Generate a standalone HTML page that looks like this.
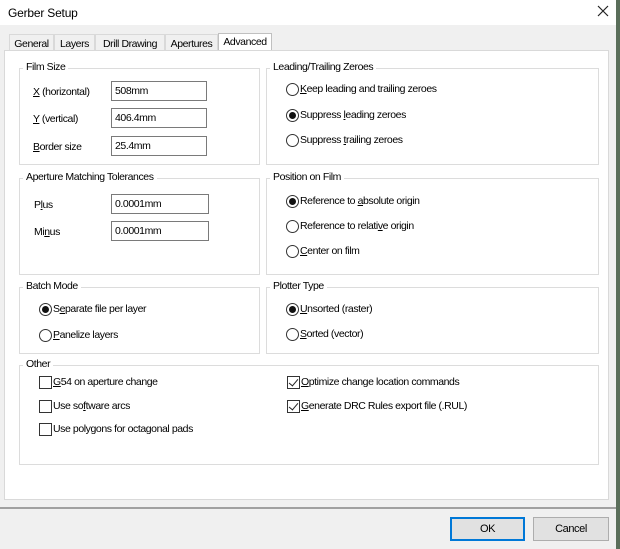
<!DOCTYPE html>
<html><head><style>
*{box-sizing:border-box;margin:0;padding:0}
body{width:620px;height:549px;background:#f0f0f0;font-family:"Liberation Sans",sans-serif;font-size:10.5px;letter-spacing:-0.42px;color:#000;position:relative;overflow:hidden}
.a{position:absolute;white-space:nowrap}
.title{left:0;top:0;width:616px;height:25px;background:#fff}
.tab{position:absolute;top:34px;height:17px;border:1px solid #d9d9d9;border-bottom:none;background:#f0f0f0;padding:3px 0 0 0;text-align:center}
.page{left:4px;top:50px;width:605px;height:450px;background:#fff;border:1px solid #d9d9d9}
.grp{position:absolute;border:1px solid #dcdcdc}
.gt{position:absolute;background:#fff;padding:0 3px;top:-8px;left:3px}
.inp{position:absolute;height:20px;border:1px solid #7a7a7a;background:#fff;padding:3px 0 0 3px}
.rad{position:absolute;width:13px;height:13px;border:1px solid #333;border-radius:50%;background:#fff}
.rad.on::after{content:"";position:absolute;left:2px;top:2px;width:7px;height:7px;border-radius:50%;background:#111}
.chk{position:absolute;width:13px;height:13px;border:1px solid #333;background:#fff}
.chk.on::after{content:"";position:absolute;left:3px;top:0px;width:4px;height:8px;border:solid #222;border-width:0 1.2px 1.2px 0;transform:rotate(40deg)}
u{text-decoration:underline}
.btn{position:absolute;top:517px;height:24px;background:#e1e1e1;border:1px solid #adadad;text-align:center;padding-top:5px;font-size:11px}
</style></head><body>
<div class="a title"></div>
<div class="a" style="left:8px;top:6px;font-size:12px;letter-spacing:-0.2px">Gerber Setup</div>
<svg class="a" style="left:597px;top:5px" width="12" height="12"><path d="M1 1L11 11M11 1L1 11" stroke="#222" stroke-width="1.2"/></svg>
<div class="a" style="left:616px;top:0;width:4px;height:549px;background:#5a6e5a"></div>

<div class="tab" style="left:9px;width:45px">General</div>
<div class="tab" style="left:54px;width:41px">Layers</div>
<div class="tab" style="left:95px;width:70px">Drill Drawing</div>
<div class="tab" style="left:165px;width:53px">Apertures</div>
<div class="a page"></div>
<div class="tab" style="left:218px;top:33px;width:54px;height:17px;background:#fff;border-color:#c0c0c0;border-bottom:none;z-index:2;padding-top:2px">Advanced</div>

<div class="grp" style="left:19px;top:68px;width:241px;height:97px"><div class="gt">Film Size</div></div>
<div class="a" style="left:33px;top:86px"><u>X</u> (horizontal)</div>
<div class="a" style="left:33px;top:113px"><u>Y</u> (vertical)</div>
<div class="a" style="left:33px;top:141px"><u>B</u>order size</div>
<div class="inp" style="left:111px;top:81px;width:96px">508mm</div>
<div class="inp" style="left:111px;top:108px;width:96px">406.4mm</div>
<div class="inp" style="left:111px;top:136px;width:96px">25.4mm</div>

<div class="grp" style="left:266px;top:68px;width:333px;height:97px"><div class="gt">Leading/Trailing Zeroes</div></div>
<div class="rad" style="left:286px;top:83px"></div><div class="a" style="left:300px;top:83px"><u>K</u>eep leading and trailing zeroes</div>
<div class="rad on" style="left:286px;top:109px"></div><div class="a" style="left:300px;top:109px">Suppress <u>l</u>eading zeroes</div>
<div class="rad" style="left:286px;top:134px"></div><div class="a" style="left:300px;top:134px">Suppress <u>t</u>railing zeroes</div>

<div class="grp" style="left:19px;top:178px;width:241px;height:97px"><div class="gt">Aperture Matching Tolerances</div></div>
<div class="a" style="left:34px;top:199px">P<u>l</u>us</div>
<div class="a" style="left:34px;top:226px">Mi<u>n</u>us</div>
<div class="inp" style="left:111px;top:194px;width:98px">0.0001mm</div>
<div class="inp" style="left:111px;top:221px;width:98px">0.0001mm</div>

<div class="grp" style="left:266px;top:178px;width:333px;height:97px"><div class="gt">Position on Film</div></div>
<div class="rad on" style="left:286px;top:195px"></div><div class="a" style="left:300px;top:195px">Reference to <u>a</u>bsolute origin</div>
<div class="rad" style="left:286px;top:220px"></div><div class="a" style="left:300px;top:220px">Reference to relati<u>v</u>e origin</div>
<div class="rad" style="left:286px;top:245px"></div><div class="a" style="left:300px;top:245px"><u>C</u>enter on film</div>

<div class="grp" style="left:19px;top:287px;width:241px;height:67px"><div class="gt">Batch Mode</div></div>
<div class="rad on" style="left:39px;top:303px"></div><div class="a" style="left:53px;top:303px">S<u>e</u>parate file per layer</div>
<div class="rad" style="left:39px;top:329px"></div><div class="a" style="left:53px;top:329px"><u>P</u>anelize layers</div>

<div class="grp" style="left:266px;top:287px;width:333px;height:67px"><div class="gt">Plotter Type</div></div>
<div class="rad on" style="left:286px;top:303px"></div><div class="a" style="left:300px;top:303px"><u>U</u>nsorted (raster)</div>
<div class="rad" style="left:286px;top:328px"></div><div class="a" style="left:300px;top:328px"><u>S</u>orted (vector)</div>

<div class="grp" style="left:19px;top:365px;width:580px;height:100px"><div class="gt">Other</div></div>
<div class="chk" style="left:39px;top:376px"></div><div class="a" style="left:53px;top:376px"><u>G</u>54 on aperture change</div>
<div class="chk" style="left:39px;top:400px"></div><div class="a" style="left:53px;top:400px">Use so<u>f</u>tware arcs</div>
<div class="chk" style="left:39px;top:423px"></div><div class="a" style="left:53px;top:423px">Use polygons for octagonal pads</div>
<div class="chk on" style="left:287px;top:376px"></div><div class="a" style="left:301px;top:376px"><u>O</u>ptimize change location commands</div>
<div class="chk on" style="left:287px;top:400px"></div><div class="a" style="left:301px;top:400px"><u>G</u>enerate DRC Rules export file (.RUL)</div>

<div class="a" style="left:0;top:507px;width:616px;height:2px;background:#a0a0a0"></div>
<div class="btn" style="left:450px;width:75px;border:2px solid #0078d7;padding-top:4px">OK</div>
<div class="btn" style="left:533px;width:76px">Cancel</div>
</body></html>
